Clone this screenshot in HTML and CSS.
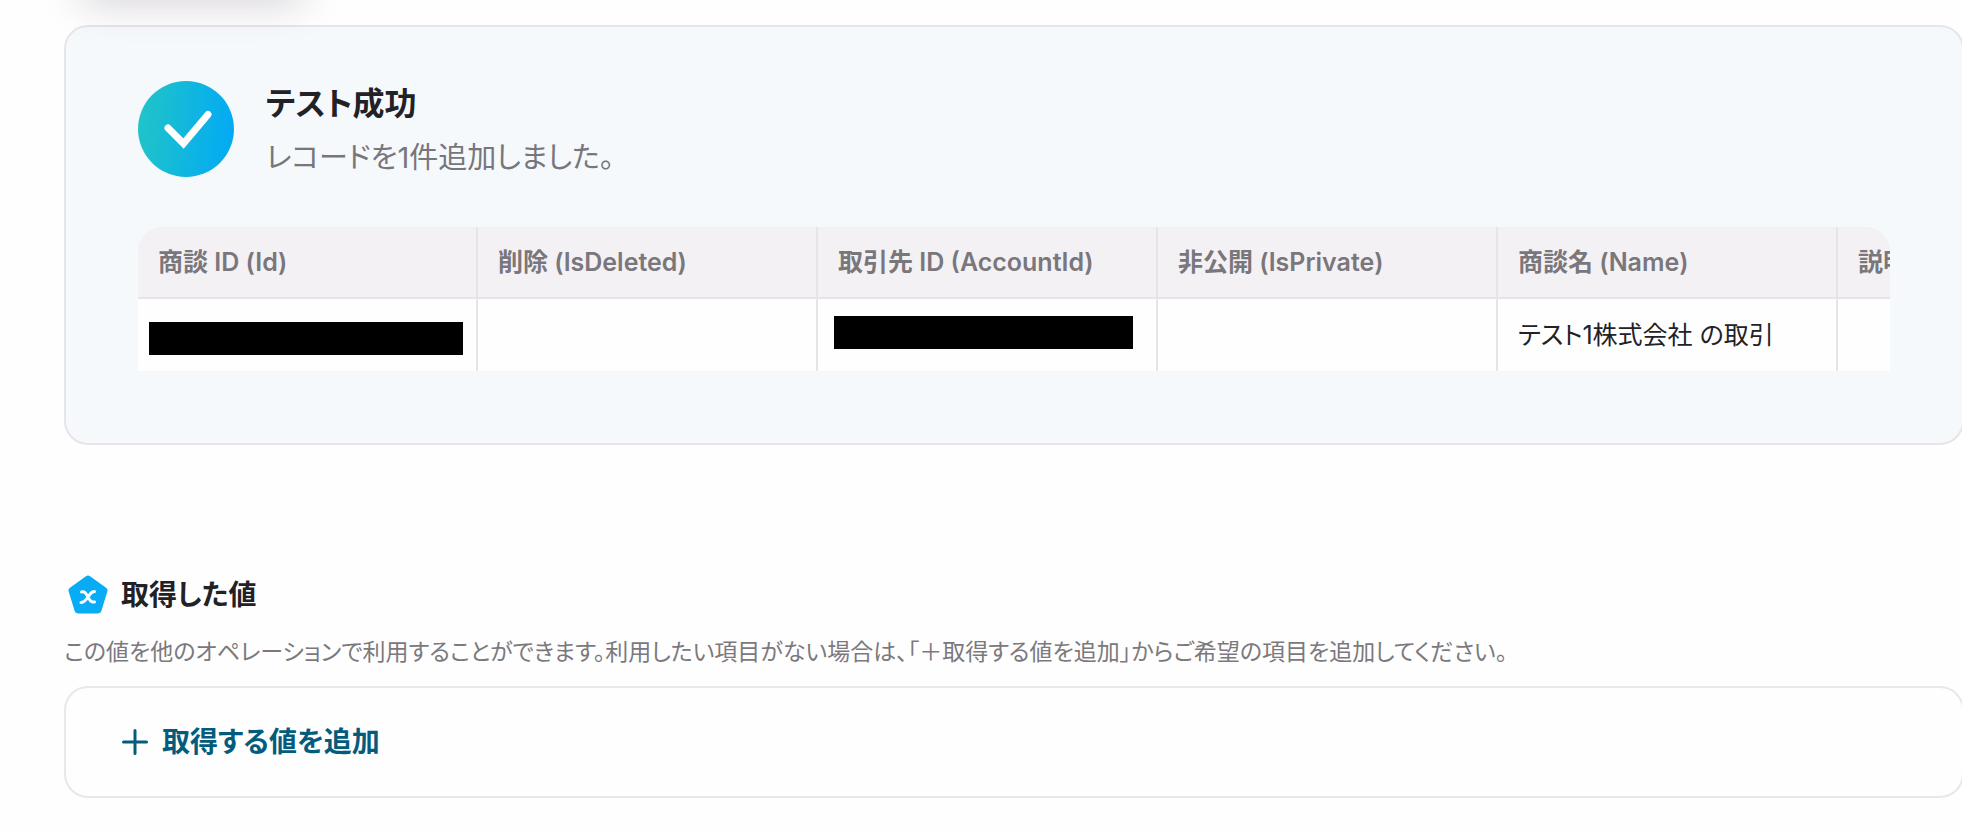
FILE: index.html
```
<!DOCTYPE html>
<html lang="ja">
<head>
    <meta charset="UTF-8">
    <meta name="viewport" content="width=device-width, initial-scale=1.0">
    <title>テスト成功</title>
    <link rel="stylesheet" href="styles.css">
</head>
<body>
    <div class="floating"></div>

    <main class="page">
        <section class="result">
            <div class="result-head">
                <svg class="result-icon" viewBox="0 0 96 96" aria-hidden="true">
                    <defs>
                        <linearGradient id="grad" x1="0" y1="0.45" x2="1" y2="0.55">
                            <stop offset="0" stop-color="#20c4c8"/>
                            <stop offset="0.95" stop-color="#04abf2"/>
                        </linearGradient>
                    </defs>
                    <circle cx="48" cy="48" r="48" fill="url(#grad)"/>
                    <path d="M30 47L45.500 62.500L70 33.500" fill="none" stroke="#fff" stroke-width="7" stroke-linecap="round"/>
                </svg>
                <div class="result-body">
                    <h1 class="result-title">テスト成功</h1>
                    <p class="result-text">レコードを1件追加しました。</p>
                </div>
            </div>

            <div class="table-wrap">
                <table class="records">
                    <thead>
                        <tr>
                            <th>商談 ID (Id)</th>
                            <th>削除 (IsDeleted)</th>
                            <th>取引先 ID (AccountId)</th>
                            <th>非公開 (IsPrivate)</th>
                            <th>商談名 (Name)</th>
                            <th>説明</th>
                        </tr>
                    </thead>
                    <tbody>
                        <tr>
                            <td><span class="mask mask-id"></span></td>
                            <td></td>
                            <td><span class="mask mask-account"></span></td>
                            <td></td>
                            <td>テスト1株式会社 の取引</td>
                            <td></td>
                        </tr>
                    </tbody>
                </table>
            </div>
        </section>

        <section class="values">
            <h2 class="values-title">
                <svg class="values-icon" viewBox="0 0 42 40" aria-hidden="true">
                    <path d="M21 4L37 15.500L31 35H11L5 15.500Z" fill="#08acf5" stroke="#08acf5" stroke-width="7" stroke-linejoin="round"/>
                    <path d="M14.500 17C18 16 19 18.500 21 22C23 25.500 24 27.500 27.500 27M27.500 16.500C24 16.500 23 19.500 21 22C19 24.500 17.500 27.500 14 27.500" fill="none" stroke="#fff" stroke-width="3" stroke-linecap="round"/>
                </svg>
                取得した値
            </h2>
            <p class="values-text">この値を他のオペレーションで利用することができます。利用したい項目がない場合は、「＋取得する値を追加」からご希望の項目を追加してください。</p>
            <div class="values-box">
                <button type="button" class="add-button">
                    <svg class="add-icon" viewBox="0 0 26 26" aria-hidden="true">
                        <path d="M13 1.500V24.500M1.500 13H24.500" fill="none" stroke="#045c7c" stroke-width="3" stroke-linecap="round"/>
                    </svg>
                    取得する値を追加
                </button>
            </div>
        </section>
    </main>
</body>
</html>
```
FILE: styles.css
```
* {
    box-sizing: border-box;
}

body {
    margin: 0;
    background-color: #fefefe;
    color: #222126;
    font-family: Inter, "Noto Sans CJK JP", sans-serif;
    font-feature-settings: "palt";
    overflow-x: hidden;
}

h1,
h2,
p {
    margin: 0;
}

/* 画面上部に浮いているパネル(影だけが見える) */
.floating {
    position: absolute;
    top: -40px;
    left: 80px;
    width: 224px;
    height: 32px;
    border-radius: 16px;
    box-shadow: 0 8px 40px rgba(50, 30, 60, 0.25);
}

.page {
    padding: 25px 0 32px 64px;
}

.result {
    padding: 54px 72px 72px 72px;
    margin-right: -2px;
    border: 2px solid #e6e5e9;
    border-radius: 24px;
    background-color: #f5f9fc;
}

.result-head {
    display: flex;
    align-items: flex-start;
    gap: 32px;
    margin-bottom: 44px;
}

.result-icon {
    flex: none;
    width: 96px;
    height: 96px;
}

.result-body {
    display: flex;
    flex-direction: column;
    gap: 6px;
}

.result-title {
    font-size: 32px;
    line-height: 46px;
    font-weight: 600;
}

.result-text {
    color: #77767a;
    font-size: 29px;
    line-height: 50px;
}

.table-wrap {
    overflow: hidden;
    border-radius: 24px 24px 0 0;
}

.records {
    table-layout: fixed;
    width: 2040px;
    border-collapse: separate;
    border-spacing: 0;
    font-size: 25px;
    line-height: 32px;
    text-align: left;
}

.records th,
.records td {
    position: relative;
    height: 72px;
    padding: 0 20px;
    border-right: 2px solid #e6e4e8;
}

.records th {
    border-bottom: 2px solid #e6e4e8;
    background-color: #f4f1f5;
    color: #79777b;
    font-weight: 600;
}

.records td {
    background-color: #fefefe;
}

.mask {
    position: absolute;
    height: 33px;
    background-color: #000;
}

.mask-id {
    top: 23px;
    left: 11px;
    right: 13px;
}

.mask-account {
    top: 17px;
    left: 16px;
    right: 23px;
}

.values {
    margin-top: 126px;
    margin-right: -2px;
}

.values-title {
    display: flex;
    align-items: center;
    gap: 12px;
    padding-left: 3px;
    font-size: 28px;
    line-height: 48px;
    font-weight: 600;
}

.values-icon {
    width: 42px;
    height: 40px;
}

.values-text {
    padding: 13px 0 14px;
    color: #7b797d;
    font-size: 23px;
    line-height: 40px;
}

.values-box {
    padding: 31px 56px;
    border: 2px solid #e8e7e9;
    border-radius: 24px;
}

.add-button {
    display: flex;
    align-items: center;
    gap: 14px;
    padding: 0;
    border: none;
    background: none;
    color: #045c7c;
    font: inherit;
    font-size: 28px;
    line-height: 46px;
    font-weight: 600;
    cursor: pointer;
}

.add-icon {
    width: 26px;
    height: 26px;
}
```
